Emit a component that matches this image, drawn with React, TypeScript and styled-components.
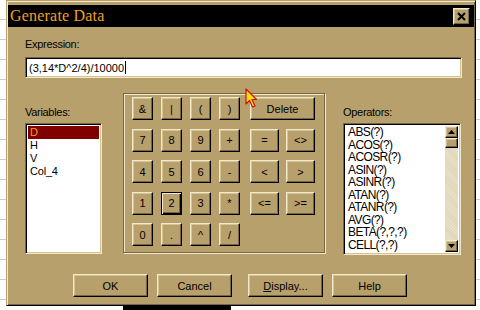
import React from 'react';
import styled, { createGlobalStyle, css } from 'styled-components';

const C = {
  face: '#b8a06c',
  light: '#f2e8cc',
  mid: '#d4c494',
  shadow: '#766644',
  dark: '#000000',
  track: '#e2d6b8',
  title: '#f0a020',
  sel: '#800000',
};

const Global = createGlobalStyle`
  html, body { margin: 0; padding: 0; background: #fff; }
  body { font-family: 'Liberation Sans', Arial, sans-serif; }
  * { box-sizing: border-box; }
`;

const raised = css`
  border: 1px solid;
  border-color: ${C.light} ${C.dark} ${C.dark} ${C.light};
  box-shadow: inset -1px -1px ${C.shadow}, inset 1px 1px ${C.mid};
  background: ${C.face};
`;

const sunken = css`
  border: 1px solid;
  border-color: ${C.shadow} ${C.light} ${C.light} ${C.shadow};
  box-shadow: inset 1px 1px ${C.dark}, inset -1px -1px ${C.mid};
  background: #fff;
`;

const Screen = styled.div`
  position: relative;
  width: 480px;
  height: 310px;
  overflow: hidden;
  padding-left: 6px;
  background-color: #fff;
  background-image: linear-gradient(#000, #000),
    repeating-linear-gradient(to bottom, transparent 0 19px, #cfcfcf 19px 20px);
  background-size: 108px 4px, 100% 100%;
  background-position: 123px 306px, 0 0;
  background-repeat: no-repeat, repeat;
`;

const Dialog = styled.div`
  width: 470px;
  height: 306px;
  background: ${C.face};
  border: 1px solid;
  border-color: ${C.face} ${C.dark} ${C.dark} ${C.face};
  box-shadow: inset 1px 1px ${C.light}, inset -1px -1px ${C.shadow};
  padding: 4px 1px 0 1px;
  display: flex;
  flex-direction: column;
`;

const TitleBar = styled.div`
  height: 22px;
  background: #000;
  display: flex;
  align-items: center;
  justify-content: space-between;
  padding: 0 4px 0 2px;
`;

const Title = styled.span`
  font-family: 'Liberation Serif', 'Times New Roman', serif;
  font-size: 16px;
  color: ${C.title};
  letter-spacing: 0.2px;
`;

const CloseBtn = styled.div`
  ${raised};
  width: 17px;
  height: 17px;
  display: flex;
  align-items: center;
  justify-content: center;
`;

const Body = styled.div`
  display: flex;
  flex-direction: column;
  padding-left: 17px;
`;

const Label = styled.div<{ $top?: number }>`
  font-size: 11px;
  line-height: 13px;
  height: 13px;
  color: #000;
  letter-spacing: -0.3px;
  margin-top: ${(p) => p.$top ?? 0}px;
`;

const Field = styled.div`
  ${sunken};
  margin-top: 6px;
  width: 437px;
  height: 21px;
  display: flex;
  align-items: center;
  padding-left: 3px;
  font-size: 11px;
  color: #000;
`;

const Caret = styled.span`
  display: inline-block;
  width: 1px;
  height: 13px;
  background: #000;
  margin-left: 1px;
`;

const MainRow = styled.div`
  display: flex;
  align-items: flex-start;
  margin-top: 15px;
  height: 162px;
`;

const Column = styled.div<{ $w: number; $ml?: number }>`
  width: ${(p) => p.$w}px;
  margin-left: ${(p) => p.$ml ?? 0}px;
  padding-top: 13px;
  display: flex;
  flex-direction: column;
`;

const ListBox = styled.div<{ $h: number }>`
  ${sunken};
  margin-top: 4px;
  height: ${(p) => p.$h}px;
  padding: 2px;
  display: flex;
  overflow: hidden;
`;

const Items = styled.div`
  flex: 1;
  display: flex;
  flex-direction: column;
  overflow: hidden;
`;

const Item = styled.div<{ $sel?: boolean; $narrow?: boolean }>`
  flex: none;
  height: ${(p) => (p.$narrow ? 12.5 : 13)}px;
  line-height: ${(p) => (p.$narrow ? 12.5 : 13)}px;
  padding-left: 2px;
  white-space: nowrap;
  font-size: ${(p) => (p.$narrow ? 12 : 11)}px;
  letter-spacing: ${(p) => (p.$narrow ? -0.6 : -0.2)}px;
  background: ${(p) => (p.$sel ? C.sel : 'transparent')};
  color: ${(p) => (p.$sel ? C.title : '#000')};
`;

const ScrollBar = styled.div`
  width: 13px;
  display: flex;
  flex-direction: column;
  background: ${C.track};
`;

const ScrollBtn = styled.div<{ $h: number }>`
  ${raised};
  height: ${(p) => p.$h}px;
  display: flex;
  align-items: center;
  justify-content: center;
`;

const Track = styled.div`
  flex: 1;
  background-color: ${C.track};
  background-image: repeating-linear-gradient(45deg, rgba(255,255,255,0.25) 0 1px, transparent 1px 2px);
`;

const Group = styled.div`
  margin-left: 21px;
  width: 202px;
  height: 160px;
  border: 1px solid ${C.shadow};
  box-shadow: inset 1px 1px ${C.light}, 1px 1px ${C.light};
  padding: 3px 0 0 8px;
  display: flex;
  align-items: flex-start;
`;

const KeyGrid = styled.div<{ $cols: string; $ml?: number }>`
  display: grid;
  grid-template-columns: ${(p) => p.$cols};
  grid-auto-rows: 23px;
  column-gap: ${(p) => (p.$ml ? 7 : 8)}px;
  row-gap: 8.5px;
  margin-left: ${(p) => p.$ml ?? 0}px;
`;

const Key = styled.div<{ $focus?: boolean; $span?: number }>`
  ${raised};
  grid-column: span ${(p) => p.$span ?? 1};
  display: flex;
  align-items: center;
  justify-content: center;
  font-size: 11px;
  color: #000;
  ${(p) =>
    p.$focus &&
    css`
      border-color: #000;
      box-shadow: inset 1px 1px ${C.light}, inset -1px -1px #000, inset -2px -2px ${C.shadow};
    `}
`;

const ButtonRow = styled.div`
  display: flex;
  margin-top: 19px;
  padding-left: 48px;
  gap: 9px;
`;

const PushButton = styled.div<{ $ml?: number }>`
  ${raised};
  width: 75px;
  height: 23px;
  display: flex;
  align-items: center;
  justify-content: center;
  font-size: 11px;
  color: #000;
  margin-left: ${(p) => p.$ml ?? 0}px;
  u { text-decoration: underline; }
`;

const Cursor = styled.svg`
  position: absolute;
  left: 245px;
  top: 88px;
`;

const variables = ['D', 'H', 'V', 'Col_4'];
const operators = [
  'ABS(?)', 'ACOS(?)', 'ACOSR(?)', 'ASIN(?)', 'ASINR(?)',
  'ATAN(?)', 'ATANR(?)', 'AVG(?)', 'BETA(?,?,?)', 'CELL(?,?)',
];
const numKeys = ['&', '|', '(', ')', '7', '8', '9', '+', '4', '5', '6', '-', '1', '2', '3', '*', '0', '.', '^', '/'];
const opKeys = ['=', '<>', '<', '>', '<=', '>='];

const Tri = ({ up }: { up?: boolean }) => (
  <svg width="7" height="4" viewBox="0 0 7 4">
    <polygon points={up ? '3.5,0 7,4 0,4' : '0,0 7,0 3.5,4'} fill="#000" />
  </svg>
);

export default function App() {
  return (
    <Screen>
      <Global />
      <Dialog>
        <TitleBar>
          <Title>Generate Data</Title>
          <CloseBtn>
            <svg width="9" height="9" viewBox="0 0 9 9">
              <path d="M1 1 L8 8 M8 1 L1 8" stroke="#000" strokeWidth="2" />
            </svg>
          </CloseBtn>
        </TitleBar>
        <Body>
          <Label $top={11}>Expression:</Label>
          <Field>
            (3,14*D^2/4)/10000<Caret />
          </Field>
          <MainRow>
            <Column $w={77}>
              <Label>Variables:</Label>
              <ListBox $h={131}>
                <Items>
                  {variables.map((v, i) => (
                    <Item key={v} $sel={i === 0}>{v}</Item>
                  ))}
                </Items>
              </ListBox>
            </Column>
            <Group>
              <KeyGrid $cols="repeat(4, 21px)">
                {numKeys.map((k) => (
                  <Key key={k} $focus={k === '2'}>{k}</Key>
                ))}
              </KeyGrid>
              <KeyGrid $cols="29px 29px" $ml={10}>
                <Key $span={2}>Delete</Key>
                {opKeys.map((k) => (
                  <Key key={k}>{k}</Key>
                ))}
              </KeyGrid>
            </Group>
            <Column $w={118} $ml={18}>
              <Label>Operators:</Label>
              <ListBox $h={132}>
                <Items>
                  {operators.map((o) => (
                    <Item key={o} $narrow>{o}</Item>
                  ))}
                </Items>
                <ScrollBar>
                  <ScrollBtn $h={12}><Tri up /></ScrollBtn>
                  <ScrollBtn $h={10} />
                  <Track />
                  <ScrollBtn $h={12}><Tri /></ScrollBtn>
                </ScrollBar>
              </ListBox>
            </Column>
          </MainRow>
          <ButtonRow>
            <PushButton>OK</PushButton>
            <PushButton>Cancel</PushButton>
            <PushButton $ml={7}><span><u>D</u>isplay...</span></PushButton>
            <PushButton>Help</PushButton>
          </ButtonRow>
        </Body>
      </Dialog>
      <Cursor width="13" height="20" viewBox="0 0 13 20">
        <polygon
          points="1,1 1,16 4.5,12.5 7.5,19 10,18 7,11.5 11.5,11.5"
          fill="#f8e010"
          stroke="#d01010"
          strokeWidth="1.2"
          strokeLinejoin="round"
        />
      </Cursor>
    </Screen>
  );
}
